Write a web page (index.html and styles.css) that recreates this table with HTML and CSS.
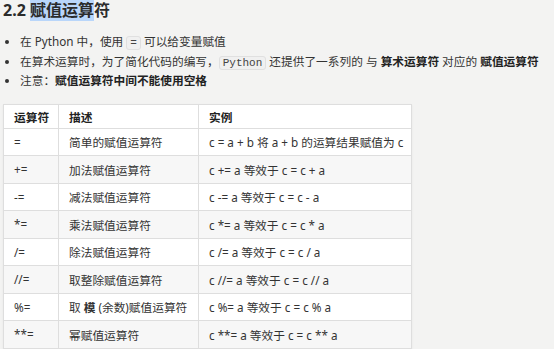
FILE: index.html
```html
<!DOCTYPE html>
<html lang="zh-CN">
<head>
<meta charset="utf-8">
<link rel="stylesheet" href="styles.css">
</head>
<body>
<h2 class="title">2.2 <span class="sel">赋值运算</span>符</h2>
<ul class="notes">
  <li>在 Python 中，使用 <code>=</code> 可以给变量赋值</li>
  <li>在算术运算时，为了简化代码的编写，<code>Python</code> 还提供了一系列的 与 <b>算术运算符</b> 对应的 <b>赋值运算符</b></li>
  <li>注意：<b>赋值运算符中间不能使用空格</b></li>
</ul>
<table class="ops">
  <colgroup>
    <col class="c1">
    <col class="c2">
    <col class="c3">
  </colgroup>
  <thead>
    <tr><th>运算符</th><th>描述</th><th>实例</th></tr>
  </thead>
  <tbody>
    <tr><td>=</td><td>简单的赋值运算符</td><td>c = a + b 将 a + b 的运算结果赋值为 c</td></tr>
    <tr><td>+=</td><td>加法赋值运算符</td><td>c += a 等效于 c = c + a</td></tr>
    <tr><td>-=</td><td>减法赋值运算符</td><td>c -= a 等效于 c = c - a</td></tr>
    <tr><td>*=</td><td>乘法赋值运算符</td><td>c *= a 等效于 c = c * a</td></tr>
    <tr><td>/=</td><td>除法赋值运算符</td><td>c /= a 等效于 c = c / a</td></tr>
    <tr><td>//=</td><td>取整除赋值运算符</td><td>c //= a 等效于 c = c // a</td></tr>
    <tr><td>%=</td><td>取 <b>模</b> (余数)赋值运算符</td><td>c %= a 等效于 c = c % a</td></tr>
    <tr><td>**=</td><td>幂赋值运算符</td><td>c **= a 等效于 c = c ** a</td></tr>
  </tbody>
</table>
</body>
</html>
```
FILE: styles.css
```css
html, body {
  margin: 0;
  padding: 0;
  background: #f3f3f2;
}
body {
  padding-left: 3px;
  font-family: "Noto Sans", "Noto Sans CJK SC", sans-serif;
  font-size: 11.7px;
  color: #333;
  overflow: hidden;
}
.title {
  margin: 0;
  padding-top: 1px;
  font-size: 16px;
  line-height: 18px;
  font-weight: 700;
  color: #2b2b2b;
}
.sel {
  background: #b9d6fa;
}
.notes {
  margin: 14px 0 0 0;
  padding: 0 0 0 17px;
  line-height: 17.5px;
}
.notes b {
  font-weight: 700;
  color: #222;
}
.notes code {
  font-family: "Liberation Mono", monospace;
  font-size: 11px;
  background: #f0f0f0;
  border: 1px solid #e0e0e0;
  border-radius: 3px;
  padding: 0 3px;
  color: #444;
}
.ops {
  margin-top: 14px;
  width: 408px;
  table-layout: fixed;
  border-collapse: collapse;
  background: #fff;
  box-shadow: 0 1px 2px rgba(0,0,0,0.06);
}
.c1 { width: 55px; }
.c2 { width: 140px; }
.c3 { width: 213px; }
.ops th, .ops td {
  border: 1px solid #dedede;
  padding: 0 0 0 10px;
  text-align: left;
  white-space: nowrap;
  overflow: hidden;
}
.ops th {
  height: 23px;
  font-weight: 700;
  color: #222;
}
.ops td {
  height: 26.5px;
}
.ops tbody tr:nth-child(even) td {
  background: #f7f7f7;
}
```
